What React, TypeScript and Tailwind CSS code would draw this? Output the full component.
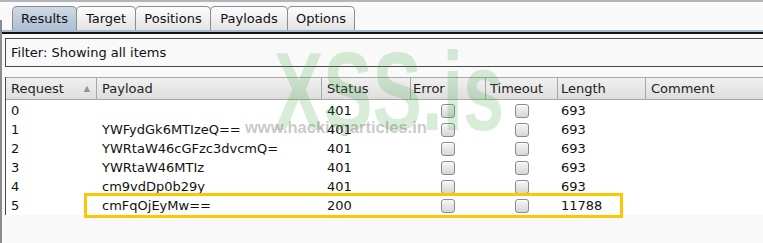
import React from 'react';

interface Row {
  id: number;
  payload: string;
  status: number;
  length: number;
}

const rows: Row[] = [
  { id: 0, payload: '', status: 401, length: 693 },
  { id: 1, payload: 'YWFydGk6MTIzeQ==', status: 401, length: 693 },
  { id: 2, payload: 'YWRtaW46cGFzc3dvcmQ=', status: 401, length: 693 },
  { id: 3, payload: 'YWRtaW46MTIz', status: 401, length: 693 },
  { id: 4, payload: 'cm9vdDp0b29y', status: 401, length: 693 },
  { id: 5, payload: 'cmFqOjEyMw==', status: 200, length: 11788 },
];

const tabs = ['Results', 'Target', 'Positions', 'Payloads', 'Options'];
const tabWidths = ['w-[65px]', 'w-[60px]', 'w-[76px]', 'w-[78px]', 'w-[68px]'];

const Checkbox: React.FC = () => (
  <div className="w-[14px] h-[14px] rounded-[3px] border border-[#8a8a8a] bg-gradient-to-b from-[#f6f6f6] to-[#d6d6d6] shadow-[inset_0_1px_0_#fff]" />
);

const App: React.FC = () => {
  return (
    <div
      className="relative w-[763px] h-[243px] overflow-hidden bg-[#f9f9f9] text-[13px] text-[#111]"
      style={{ fontFamily: '"DejaVu Sans", sans-serif' }}
    >
      <div className="h-[2px] bg-[#b4b4bc]" />
      <div className="flex h-[241px]">
        <div className="w-[2px] mt-[18px] bg-[#8c8c8c]" />
        <div className="flex-1 flex flex-col">
          {/* tabs */}
          <div className="flex pl-[10px] pt-[4px] h-[28px]">
            {tabs.map((t, i) => (
              <div
                key={t}
                className={`${tabWidths[i]} h-[24px] pt-[1px] flex items-center justify-center rounded-t-[5px] border border-b-0 border-[#8c8c8c] ${
                  i === 0
                    ? 'bg-gradient-to-b from-[#cfdae6] to-[#abbfd3]'
                    : 'bg-gradient-to-b from-[#fdfdfd] to-[#e4e4e4]'
                } ${i > 0 ? '-ml-px' : ''}`}
              >
                {t}
              </div>
            ))}
          </div>
          <div className="h-[4px] bg-[#a6b9cf] border-b-2 border-[#141414]" />

          {/* filter */}
          <div className="mt-[4px] ml-[3px] h-[29px] border-y border-l border-[#4a4a4a] flex items-center pl-[5px] pt-[1px]">
            Filter: Showing all items
          </div>

          {/* table */}
          <div className="mt-[10px] ml-[3px] border-l border-[#4a4a4a] relative">
            <div className="flex h-[23px] border-t border-b border-[#a8a8a8] bg-gradient-to-b from-[#f0f0f0] to-[#dedede] text-[#222]">
              <div className="w-[91px] flex items-center pl-[5px] pr-[6px] justify-between border-r border-[#a8a8a8]">
                <span>Request</span>
                <span className="text-[8px] text-[#8a94a0]">▲</span>
              </div>
              <div className="w-[225px] flex items-center pl-[5px] border-r border-[#a8a8a8]">Payload</div>
              <div className="w-[89px] flex items-center pl-[5px] border-r border-[#a8a8a8]">Status</div>
              <div className="w-[75px] flex items-center pl-[2px] border-r border-[#a8a8a8]">Error</div>
              <div className="w-[72px] flex items-center pl-[4px] border-r border-[#a8a8a8]">Timeout</div>
              <div className="w-[88px] flex items-center pl-[3px] border-r border-[#a8a8a8]">Length</div>
              <div className="flex-1 flex items-center pl-[5px]">Comment</div>
            </div>
            <div className="bg-white pt-[1px]">
              {rows.map((r) => (
                <div key={r.id} className="flex h-[19px] items-center">
                  <div className="w-[91px] pl-[5px]">{r.id}</div>
                  <div className="w-[225px] pl-[5px]">{r.payload}</div>
                  <div className="w-[89px] pl-[5px]">{r.status}</div>
                  <div className="w-[75px] flex justify-center pr-[2px]">
                    <Checkbox />
                  </div>
                  <div className="w-[72px] flex justify-center">
                    <Checkbox />
                  </div>
                  <div className="w-[88px] pl-[3px]">{r.length}</div>
                  <div className="flex-1" />
                </div>
              ))}
            </div>
            {/* highlight box */}
            <div className="absolute left-[78px] top-[116px] w-[539px] h-[25px] border-[3px] border-[#fcc600]" />
          </div>
          <div className="flex-1" />
        </div>
      </div>

      {/* watermark */}
      <div
        className="absolute left-[274px] top-[36px] text-[112px] leading-none font-bold text-[#3aa63a]/20 origin-left scale-x-[0.66] pointer-events-none"
        style={{ fontFamily: '"Liberation Sans", sans-serif' }}
      >
        XSS.is
      </div>
      <div
        className="absolute left-[245px] top-[119px] text-[16.5px] leading-none font-bold text-[#444]/30 pointer-events-none"
        style={{ fontFamily: '"Liberation Sans", sans-serif' }}
      >
        www.hackingarticles.in
      </div>
    </div>
  );
};

export default App;
